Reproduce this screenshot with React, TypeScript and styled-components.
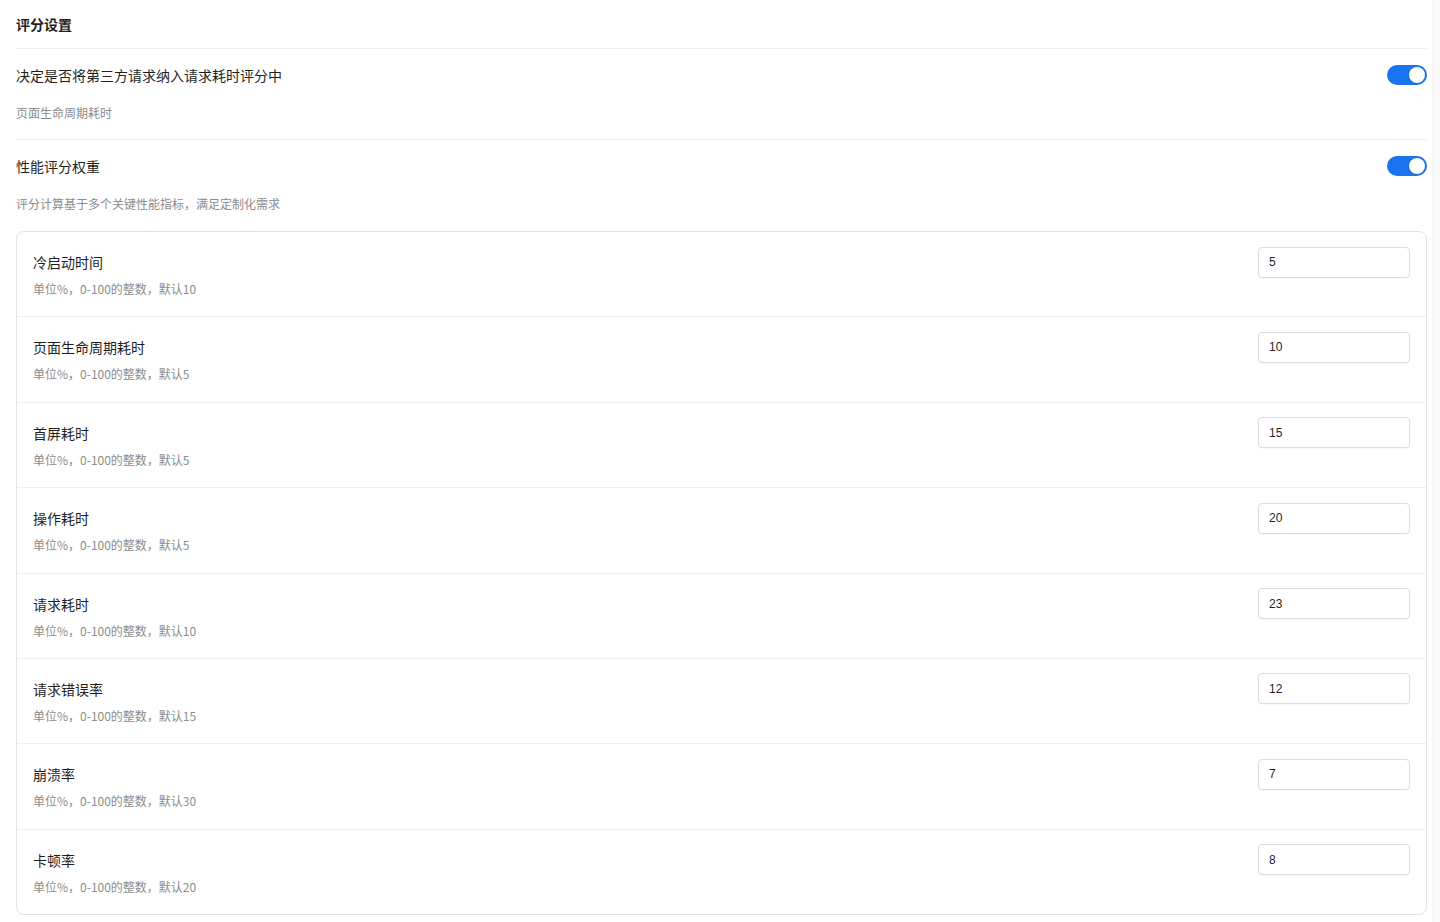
import React, { useState } from 'react'
import styled, { createGlobalStyle } from 'styled-components'

const GlobalStyle = createGlobalStyle`
  html, body {
    margin: 0;
    padding: 0;
    background: #fafafa;
    font-family: "PingFang SC", "Noto Sans CJK SC", "Liberation Sans", sans-serif;
    color: #1f1f1f;
  }
  * { box-sizing: border-box; }
`

const Screen = styled.div`
  width: 1432px;
  min-height: 922px;
  background: #ffffff;
  box-shadow: 0 1px 4px rgba(0, 0, 0, 0.06);
  padding: 0 5px 8px 16px;
`

const Header = styled.div`
  height: 49px;
  display: flex;
  align-items: center;
  font-size: 14px;
  font-weight: 700;
  border-bottom: 1px solid #f0f0f0;
`

const Setting = styled.div<{ $last?: boolean }>`
  padding: 15px 0 ${(p) => (p.$last ? '17px' : '16px')};
  border-bottom: ${(p) => (p.$last ? 'none' : '1px solid #f0f0f0')};
`

const SettingHead = styled.div`
  display: flex;
  align-items: center;
  justify-content: space-between;
  height: 22px;
  font-size: 14px;
`

const Hint = styled.div`
  margin-top: 17px;
  font-size: 12px;
  line-height: 20px;
  color: #8c8c8c;
`

const Track = styled.button<{ $on: boolean }>`
  width: 40px;
  height: 20px;
  border: none;
  border-radius: 10px;
  background: ${(p) => (p.$on ? '#1a73f0' : '#d9d9d9')};
  display: flex;
  align-items: center;
  justify-content: ${(p) => (p.$on ? 'flex-end' : 'flex-start')};
  padding: 0 2px;
  cursor: pointer;
`

const Knob = styled.span`
  width: 16px;
  height: 16px;
  border-radius: 50%;
  background: #ffffff;
  box-shadow: 0 0 0 1px rgba(0, 0, 0, 0.08);
`

const WeightCard = styled.div`
  border: 1px solid #e2e2e2;
  border-radius: 8px;
  overflow: hidden;
`

const WeightRow = styled.div<{ $last?: boolean }>`
  height: ${(p) => (p.$last ? '84px' : '85.4px')};
  padding: 14px 16px 0;
  border-bottom: ${(p) => (p.$last ? 'none' : '1px solid #f0f0f0')};
`

const WeightHead = styled.div`
  display: flex;
  align-items: center;
  justify-content: space-between;
  height: 32px;
  font-size: 14px;
`

const WeightHint = styled.div`
  margin-top: 3px;
  font-size: 12px;
  line-height: 16px;
  color: #8c8c8c;
`

const NumberInput = styled.input`
  width: 152px;
  height: 31px;
  border: 1px solid #dcdcdc;
  border-radius: 4px;
  padding: 0 10px;
  font-size: 12px;
  font-family: "Liberation Sans", "Noto Sans CJK SC", sans-serif;
  color: #1f1f1f;
  outline: none;
  box-shadow: 0 1px 1px rgba(0, 0, 0, 0.03);
`

const Toggle = ({ initial }: { initial: boolean }) => {
  const [on, setOn] = useState(initial)
  return (
    <Track $on={on} onClick={() => setOn(!on)}>
      <Knob />
    </Track>
  )
}

const weights = [
  { name: '冷启动时间', value: '5', def: 10 },
  { name: '页面生命周期耗时', value: '10', def: 5 },
  { name: '首屏耗时', value: '15', def: 5 },
  { name: '操作耗时', value: '20', def: 5 },
  { name: '请求耗时', value: '23', def: 10 },
  { name: '请求错误率', value: '12', def: 15 },
  { name: '崩溃率', value: '7', def: 30 },
  { name: '卡顿率', value: '8', def: 20 },
]

const App = () => {
  return (
    <Screen>
      <GlobalStyle />
      <Header>评分设置</Header>
      <Setting>
        <SettingHead>
          决定是否将第三方请求纳入请求耗时评分中
          <Toggle initial />
        </SettingHead>
        <Hint>页面生命周期耗时</Hint>
      </Setting>
      <Setting $last>
        <SettingHead>
          性能评分权重
          <Toggle initial />
        </SettingHead>
        <Hint>评分计算基于多个关键性能指标，满足定制化需求</Hint>
      </Setting>
      <WeightCard>
        {weights.map((w, i) => (
          <WeightRow key={w.name} $last={i === weights.length - 1}>
            <WeightHead>
              {w.name}
              <NumberInput defaultValue={w.value} />
            </WeightHead>
            <WeightHint>单位%，0-100的整数，默认{w.def}</WeightHint>
          </WeightRow>
        ))}
      </WeightCard>
    </Screen>
  )
}

export default App
